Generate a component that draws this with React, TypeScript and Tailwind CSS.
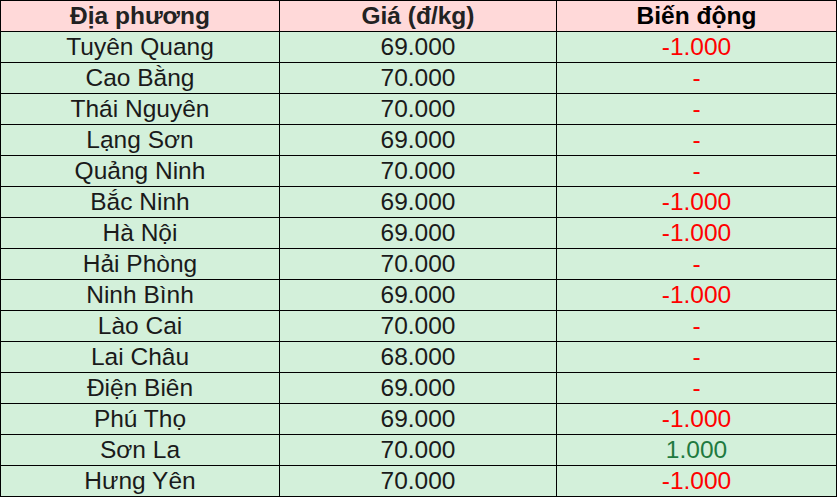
import React from "react";

interface IPriceRow {
  place: string;
  price: string;
  change: string;
}

const rows: IPriceRow[] = [
  { place: "Tuyên Quang", price: "69.000", change: "-1.000" },
  { place: "Cao Bằng", price: "70.000", change: "-" },
  { place: "Thái Nguyên", price: "70.000", change: "-" },
  { place: "Lạng Sơn", price: "69.000", change: "-" },
  { place: "Quảng Ninh", price: "70.000", change: "-" },
  { place: "Bắc Ninh", price: "69.000", change: "-1.000" },
  { place: "Hà Nội", price: "69.000", change: "-1.000" },
  { place: "Hải Phòng", price: "70.000", change: "-" },
  { place: "Ninh Bình", price: "69.000", change: "-1.000" },
  { place: "Lào Cai", price: "70.000", change: "-" },
  { place: "Lai Châu", price: "68.000", change: "-" },
  { place: "Điện Biên", price: "69.000", change: "-" },
  { place: "Phú Thọ", price: "69.000", change: "-1.000" },
  { place: "Sơn La", price: "70.000", change: "1.000" },
  { place: "Hưng Yên", price: "70.000", change: "-1.000" },
];

const App: React.FC = () => {
  return (
    <div className="w-[837px] h-[498px] bg-white font-['Liberation_Sans',Arial,sans-serif]">
      <table className="w-[836px] border-collapse table-fixed text-[24.5px] leading-none">
        <colgroup>
          <col className="w-[279px]" />
          <col className="w-[277px]" />
          <col className="w-[280px]" />
        </colgroup>
        <thead>
          <tr className="bg-[#ffd9d9] h-[31px]">
            <th className="border border-black font-bold text-[#222] p-0 pt-px">Địa phương</th>
            <th className="border border-black font-bold text-[#222] p-0 pt-px">Giá (đ/kg)</th>
            <th className="border border-black font-bold text-black p-0 pt-px">Biến động</th>
          </tr>
        </thead>
        <tbody>
          {rows.map((row, index) => {
            const color =
              row.change === "1.000" ? "text-[#1f7a3f]" : "text-[#ff0000]";
            return (
              <tr key={index} className="bg-[#d3f0da] h-[31px]">
                <td className="border border-black text-center text-[#1a1a1a] p-0 pt-px">{row.place}</td>
                <td className="border border-black text-center text-[#1a1a1a] p-0 pt-px">{row.price}</td>
                <td className={`border border-black text-center p-0 pt-px ${color}`}>{row.change}</td>
              </tr>
            );
          })}
        </tbody>
      </table>
    </div>
  );
};

export default App;
